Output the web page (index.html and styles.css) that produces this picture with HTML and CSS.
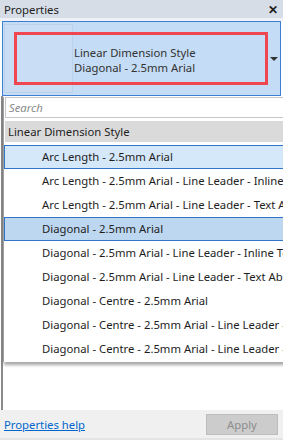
FILE: index.html
```html
<!DOCTYPE html>
<html lang="en">
<head>
    <meta charset="UTF-8">
    <title>Properties</title>
    <link rel="stylesheet" href="styles.css">
</head>
<body>
  <div class="palette">
    <div class="titlebar">
      <span>Properties</span>
      <span class="close">&#x2715;</span>
    </div>

    <div class="type-selector">
      <div class="thumb"></div>
      <div class="type-name">
        <div>Linear Dimension Style</div>
        <div>Diagonal - 2.5mm Arial</div>
      </div>
      <div class="arrow"></div>
      <div class="highlight"></div>
    </div>

    <div class="panel">
      <div class="dropdown">
        <div class="search">Search</div>
        <div class="group">Linear Dimension Style</div>
        <div class="item hover">Arc Length - 2.5mm Arial</div>
        <div class="item">Arc Length - 2.5mm Arial - Line Leader - Inline Text</div>
        <div class="item">Arc Length - 2.5mm Arial - Line Leader - Text Above</div>
        <div class="item selected">Diagonal - 2.5mm Arial</div>
        <div class="item">Diagonal - 2.5mm Arial - Line Leader - Inline Text</div>
        <div class="item">Diagonal - 2.5mm Arial - Line Leader - Text Above</div>
        <div class="item">Diagonal - Centre - 2.5mm Arial</div>
        <div class="item">Diagonal - Centre - 2.5mm Arial - Line Leader - Inline</div>
        <div class="item">Diagonal - Centre - 2.5mm Arial - Line Leader - Text</div>
      </div>
    </div>

    <div class="footer">
      <a href="#" class="help">Properties help</a>
      <button class="apply">Apply</button>
    </div>
  </div>
</body>
</html>
```

FILE: styles.css
```css
body {
  margin: 0;
  font-family: 'Noto Sans', sans-serif;
  font-size: 11.3px;
  color: #1e1e1e;
  background-color: #fff;
  overflow: hidden;
}

.palette {
  width: 283px;
  height: 440px;
  display: flex;
  flex-direction: column;
  overflow: hidden;
}

.titlebar {
  height: 18px;
  background-color: #d6dde7;
  display: flex;
  justify-content: space-between;
  align-items: center;
  padding: 0 5px 0 4px;
  border-bottom: 3px solid #eef2f6;
}

.close {
  font-size: 12px;
  font-weight: bold;
}

.type-selector {
  position: relative;
  height: 73px;
  margin: 0 2px;
  background-color: #c4dcf5;
  border: 1px solid #3d7fd3;
  display: flex;
  align-items: center;
}

.thumb {
  width: 67px;
  height: 67px;
  margin-left: 1px;
  background-color: #c9def4;
  border: 1px solid #bcd2ea;
}

.type-name {
  flex: 1;
  padding: 2px 0 0 1px;
  line-height: 15px;
  color: #333;
}

.arrow {
  width: 0;
  height: 0;
  margin-right: 2px;
  border-left: 4px solid transparent;
  border-right: 4px solid transparent;
  border-top: 4px solid #333;
}

/* red annotation box */
.highlight {
  position: absolute;
  left: 11px;
  top: 10px;
  width: 248px;
  height: 47px;
  border: 3px solid #ef4650;
}

.panel {
  flex: 1;
  border-left: 2px solid #8a8a8a;
  margin-left: 1px;
}

.dropdown {
  width: 320px;
  background-color: #fff;
  border-left: 1px solid #a0a0a0;
  box-shadow: 1px 3px 3px rgba(0, 0, 0, 0.35);
  padding-bottom: 1px;
}

.search {
  height: 19px;
  margin: 1px 0 0 1px;
  border: 1px solid #c8c8c8;
  color: #8a8a8a;
  font-style: italic;
  padding-left: 3px;
  line-height: 19px;
}

.group {
  height: 21px;
  margin: 3px 0 3px 1px;
  background-color: #dadada;
  line-height: 21px;
  padding-left: 3px;
}

.item {
  height: 22px;
  line-height: 22px;
  padding-left: 37px;
  border: 1px solid transparent;
  white-space: nowrap;
}

.item.hover {
  background-color: #d5e8f9;
  border-color: #2f76c9;
}

.item.selected {
  background-color: #bdd7f1;
  border-color: #2f76c9;
}

.footer {
  height: 28px;
  background-color: #f0f0f0;
  display: flex;
  justify-content: space-between;
  align-items: center;
  padding: 0 5px 0 4px;
  border-bottom: 2px solid #e4e4e4;
}

.help {
  color: #0066cc;
}

.apply {
  width: 72px;
  height: 21px;
  font-family: 'Noto Sans', sans-serif;
  font-size: 11.3px;
  color: #8d8d8d;
  background-color: #cccccc;
  border: 1px solid #bdbdbd;
}
```
